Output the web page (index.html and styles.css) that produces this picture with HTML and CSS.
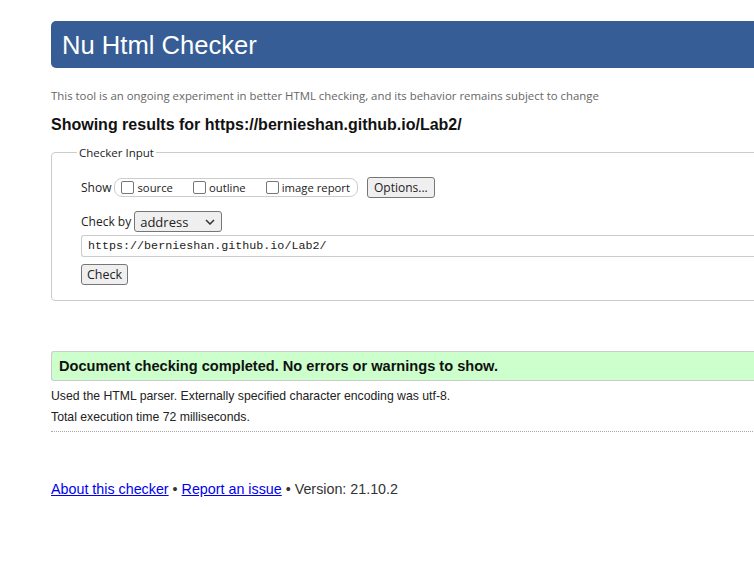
FILE: index.html
```html
<!DOCTYPE html>
<html>
<head>
<meta charset="utf-8">
<link rel="stylesheet" href="styles.css">
</head>
<body>
<div class="page">
  <h1 class="banner">Nu Html Checker</h1>
  <p class="intro">This tool is an ongoing experiment in better HTML checking, and its behavior remains subject to change</p>
  <h2 class="results-title">Showing results for https://bernieshan.github.io/Lab2/</h2>
  <fieldset class="checker">
    <legend class="legend">Checker Input</legend>
    <div class="row show-row">
      <span class="label">Show</span>
      <span class="group">
        <label class="opt"><span class="box"></span>source</label>
        <label class="opt"><span class="box"></span>outline</label>
        <label class="opt"><span class="box"></span>image report</label>
      </span>
      <span class="btn options">Options...</span>
    </div>
    <div class="row by-row">
      <span class="label">Check by</span>
      <span class="select">address
        <svg class="chev" width="10" height="6" viewBox="0 0 10 6"><path d="M1 1 L5 5 L9 1" fill="none" stroke="#333" stroke-width="1.5"/></svg>
      </span>
    </div>
    <div class="url">https://bernieshan.github.io/Lab2/</div>
    <div class="row"><span class="btn check">Check</span></div>
  </fieldset>
  <div class="success">Document checking completed. No errors or warnings to show.</div>
  <p class="info">Used the HTML parser. Externally specified character encoding was utf-8.</p>
  <p class="info last">Total execution time 72 milliseconds.</p>
  <p class="footer"><a href="#">About this checker</a> • <a href="#">Report an issue</a> • Version: 21.10.2</p>
</div>
</body>
</html>
```
FILE: styles.css
```css
html, body { margin: 0; padding: 0; overflow: hidden; background: #fff; }
body { width: 754px; height: 567px; }
.page {
  width: 1000px;
  padding: 21px 0 0 51px;
  font-family: "Liberation Sans", Arial, sans-serif;
  color: #222;
}
.banner {
  margin: 0;
  height: 47px;
  line-height: 48px;
  background: #365d95;
  color: #fff;
  font-weight: normal;
  font-size: 25.6px;
  padding-left: 11px;
  border-radius: 5px 0 0 5px;
}
.intro {
  margin: 20px 0 0 0;
  font-family: "Open Sans", sans-serif;
  font-size: 11.4px;
  color: #666;
  line-height: 16px;
}
.results-title {
  margin: 11px 0 0 0;
  font-size: 16px;
  font-weight: bold;
  color: #111;
  line-height: 20px;
}
.checker {
  margin: 10px 0 0 0;
  padding: 17px 0 15px 29px;
  border: 1px solid #ccc;
  border-radius: 4px;
  font-family: "Open Sans", sans-serif;
  font-size: 11.5px;
  color: #222;
}
.legend {
  margin-left: -4px;
  padding: 0 2px;
  font-size: 11.5px;
}
.row { display: flex; align-items: center; }
.label { margin-right: 3px; font-size: 12px; }
.group {
  display: flex;
  align-items: center;
  border: 1px solid #ccc;
  border-radius: 8px;
  height: 17px;
  padding: 0 7px 0 6px;
  gap: 20px;
}
.opt { display: flex; align-items: center; gap: 3px; font-size: 11.3px; }
.box {
  width: 11px; height: 11px;
  border: 1px solid #767676;
  border-radius: 2px;
  background: #fff;
}
.btn {
  display: inline-flex;
  align-items: center;
  box-sizing: border-box;
  border: 1px solid #767676;
  border-radius: 3px;
  background: #efefef;
  padding: 0 6px;
  height: 21px;
  font-size: 12.5px;
}
.options { margin-left: 9px; font-size: 12px; padding: 0 6px; }
.check { padding: 0 5px; }
.by-row { margin-top: 13px; }
.select {
  display: inline-flex;
  align-items: center;
  justify-content: space-between;
  box-sizing: border-box;
  width: 88px;
  height: 21px;
  padding: 0 6px 0 5px;
  border: 1px solid #767676;
  border-radius: 3px;
  background: #efefef;
  font-size: 13px;
}
.url {
  margin-top: 3px;
  height: 20px;
  line-height: 20px;
  border: 1px solid #ccc;
  border-right: none;
  border-radius: 3px 0 0 3px;
  padding-left: 6px;
  font-family: "Liberation Mono", monospace;
  font-size: 11.7px;
}
.check { margin-top: 7px; }
.success {
  margin-top: 50px;
  height: 28px;
  line-height: 28px;
  background: #ccffcc;
  border: 1px solid #ccc;
  border-right: none;
  border-radius: 3px 0 0 3px;
  padding-left: 7px;
  font-size: 14.6px;
  font-weight: bold;
  color: #111;
}
.info {
  margin: 8px 0 0 0;
  font-size: 12.25px;
  line-height: 15px;
  color: #222;
}
.last {
  margin-top: 6px;
  padding-bottom: 6px;
  border-bottom: 1px dotted #aaa;
}
.footer {
  margin: 49px 0 0 0;
  font-size: 14.3px;
  color: #333;
}
.footer a { color: #00e; }
```
